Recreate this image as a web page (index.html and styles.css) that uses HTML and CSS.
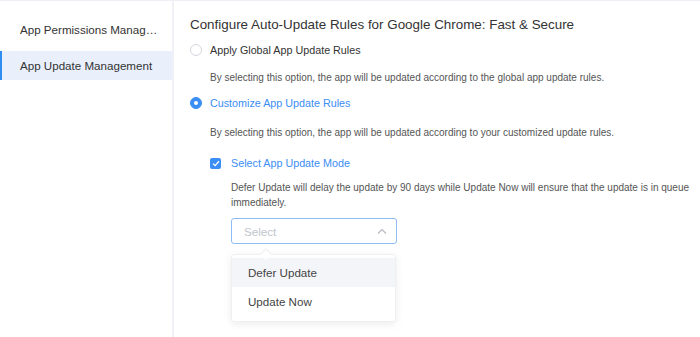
FILE: index.html
```html
<!DOCTYPE html>
<html lang="en">
<head>
  <meta charset="UTF-8" />
  <title>App Update Management</title>
  <link rel="stylesheet" href="styles.css">
</head>
<body>
  <div class="layout">
    <aside class="sidebar">
      <div class="nav-item">App Permissions Management</div>
      <div class="nav-item active">App Update Management</div>
    </aside>
    <main class="content">
      <h2 class="title">Configure Auto-Update Rules for Google Chrome: Fast &amp; Secure</h2>

      <label class="radio">
        <span class="radio-dot"></span>
        <span class="radio-label">Apply Global App Update Rules</span>
      </label>
      <p class="hint">By selecting this option, the app will be updated according to the global app update rules.</p>

      <label class="radio checked">
        <span class="radio-dot"></span>
        <span class="radio-label">Customize App Update Rules</span>
      </label>
      <p class="hint hint-custom">By selecting this option, the app will be updated according to your customized update rules.</p>

      <div class="sub">
        <label class="checkbox">
          <span class="check-box">
            <svg width="8" height="7" viewBox="0 0 8 7"><path d="M1 3.6 L3.1 5.6 L7 1.2" fill="none" stroke="#fff" stroke-width="1.3"/></svg>
          </span>
          <span class="check-label">Select App Update Mode</span>
        </label>
        <p class="hint sub-hint">Defer Update will delay the update by 90 days while Update Now will ensure that the update is in queue immediately.</p>

        <div class="select">
          <span class="placeholder">Select</span>
          <svg class="arrow" width="10" height="6" viewBox="0 0 10 6"><path d="M1 5.5 L5 1.5 L9 5.5" fill="none" stroke="#b4b8c0" stroke-width="1.1"/></svg>
        </div>
        <div class="dropdown">
          <span class="caret"></span>
          <div class="option hover">Defer Update</div>
          <div class="option">Update Now</div>
        </div>
      </div>
    </main>
  </div>
</body>
</html>
```

FILE: styles.css
```css
* { box-sizing: border-box; }
body {
  margin: 0;
  font-family: "Liberation Sans", Arial, sans-serif;
  background: #fff;
  color: #333;
}
.layout {
  display: flex;
  height: 337px;
  border-top: 1px solid #eef0f5;
}
.sidebar {
  width: 174px;
  flex-shrink: 0;
  border-right: 2px solid #f0f1f6;
  padding-top: 14px;
}
.nav-item {
  height: 29px;
  line-height: 29px;
  padding: 0 12px 0 18px;
  font-size: 11.6px;
  color: #333;
  white-space: nowrap;
  overflow: hidden;
  text-overflow: ellipsis;
  border-left: 2px solid transparent;
  margin-bottom: 7px;
}
.nav-item.active {
  background: #e9f0fb;
  border-left-color: #2f8cf0;
}
.content {
  flex: 1;
  padding: 15px 0 0 16px;
}
.title {
  margin: 0 0 7px;
  font-size: 13.4px;
  font-weight: normal;
  color: #333;
  line-height: 18px;
}
.radio {
  display: flex;
  align-items: center;
  gap: 8px;
  height: 18px;
}
.radio-dot {
  width: 12px;
  height: 12px;
  border: 1px solid #d4d7dd;
  border-radius: 50%;
  background: #fff;
  display: flex;
  align-items: center;
  justify-content: center;
}
.radio.checked .radio-dot {
  background: #3b8ef3;
  border-color: #3b8ef3;
}
.radio.checked .radio-dot::after {
  content: "";
  width: 4px;
  height: 4px;
  border-radius: 50%;
  background: #fff;
}
.radio-label {
  font-size: 10.75px;
  color: #333;
}
.radio.checked .radio-label { color: #3b8ef3; }
.hint {
  margin: 11px 0 9px 20px;
  font-size: 10px;
  line-height: 15px;
  color: #555;
}
.hint-custom { margin-top: 13px; }
.sub {
  padding-left: 20px;
  margin-top: 14px;
}
.checkbox {
  display: flex;
  align-items: center;
  gap: 10px;
  height: 18px;
}
.check-box {
  width: 11px;
  height: 11px;
  border-radius: 2px;
  background: #3b8ef3;
  display: flex;
  align-items: center;
  justify-content: center;
}
.check-label {
  font-size: 10.75px;
  color: #3b8ef3;
}
.sub-hint {
  margin: 8px 0 8px 21px;
  width: 470px;
}
.select {
  margin-left: 21px;
  width: 166px;
  height: 26px;
  border: 1px solid #8dbcf7;
  border-radius: 3px;
  display: flex;
  align-items: center;
  justify-content: space-between;
  padding: 0 9px 0 12px;
}
.placeholder {
  font-size: 11.6px;
  color: #c0c4cc;
}
.dropdown {
  position: relative;
  margin: 10px 0 0 21px;
  width: 165px;
  background: #fff;
  border: 1px solid #eef0f3;
  border-radius: 3px;
  box-shadow: 0 2px 8px rgba(0, 0, 0, 0.08);
  padding: 3px 0 5px;
}
.caret {
  position: absolute;
  top: -5px;
  left: 30px;
  width: 8px;
  height: 8px;
  background: #fff;
  border-left: 1px solid #eef0f3;
  border-top: 1px solid #eef0f3;
  transform: rotate(45deg);
}
.option {
  height: 29px;
  line-height: 29px;
  padding: 0 16px;
  font-size: 11.6px;
  color: #444;
}
.option.hover { background: #f4f5f9; }
```
